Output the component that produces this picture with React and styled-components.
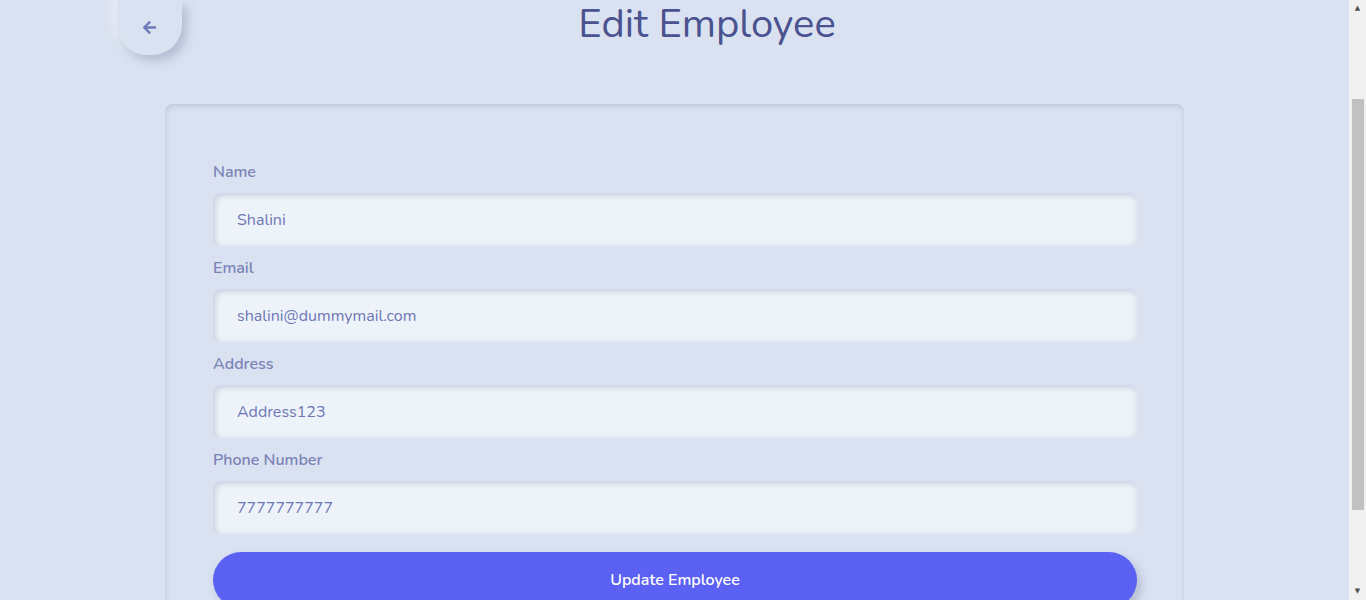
import React from "react";
import styled, { createGlobalStyle } from "styled-components";
import { FaArrowLeft } from "react-icons/fa";

const Global = createGlobalStyle`
  body {
    margin: 0;
    background: #dae2f1;
    font-family: "Nunito", "Lato", "Noto Sans", sans-serif;
  }
`;

const Shell = styled.div`
  display: flex;
  height: 100vh;
  overflow: hidden;
`;

const Main = styled.main`
  flex: 1;
  min-width: 0;
  overflow: hidden;
`;

const ScrollBar = styled.div`
  width: 17px;
  flex: none;
  background: #f1f1f1;
  display: flex;
  flex-direction: column;
  align-items: center;
`;

const ScrollArrow = styled.div`
  height: 17px;
  width: 17px;
  display: flex;
  align-items: center;
  justify-content: center;
  color: #505050;
  font-size: 7px;
  line-height: 1;
  font-family: "DejaVu Sans", sans-serif;
`;

const Track = styled.div`
  flex: 1;
  width: 100%;
  padding-top: 82px;
  box-sizing: border-box;
  display: flex;
  justify-content: center;
`;

const Thumb = styled.div`
  width: 12px;
  margin-left: 1px;
  height: 411px;
  background: #c1c1c1;
`;

const Page = styled.div`
  max-width: 1115px;
  margin: 0 auto;
  padding-bottom: 120px;
`;

const Header = styled.header`
  display: flex;
  align-items: flex-start;
`;

const BackButton = styled.button`
  width: 65px;
  height: 55px;
  flex: none;
  border: none;
  border-radius: 0 0 30px 30px;
  background: #dae2f1;
  color: #6c79b8;
  display: flex;
  align-items: center;
  justify-content: center;
  padding: 0;
  cursor: pointer;
  box-shadow: 5px 6px 10px rgba(150, 160, 185, 0.55), -4px -4px 8px rgba(255, 255, 255, 0.5);
`;

const Title = styled.h1`
  flex: 1;
  margin: 0;
  text-align: center;
  font-weight: 400;
  font-size: 40px;
  line-height: 48px;
  color: #4a5290;
`;

const Card = styled.form`
  margin: 49px 48px 0;
  padding: 57px 47px 48px 48px;
  border-radius: 8px;
  background: #dae2f1;
  box-shadow: inset 1px 3px 5px rgba(170, 180, 205, 0.5), inset -1px 0 2px rgba(195, 205, 225, 0.2);
  display: flex;
  flex-direction: column;
  gap: 10px;
`;

const Field = styled.div`
  display: flex;
  flex-direction: column;
  gap: 10px;
`;

const Label = styled.label`
  font-size: 16px;
  font-weight: 600;
  line-height: 22px;
  color: #7a82b6;
`;

const Input = styled.input`
  height: 54px;
  box-sizing: border-box;
  border: none;
  outline: none;
  border-radius: 8px;
  padding: 0 24px;
  background: #eef3f9;
  font-family: inherit;
  font-size: 16px;
  color: #6c77b5;
  box-shadow: inset 3px 3px 5px rgba(175, 185, 210, 0.5), inset -2px -2px 4px rgba(220, 226, 238, 0.8);
`;

const Submit = styled.button`
  margin-top: 7px;
  height: 56px;
  border: none;
  border-radius: 28px;
  background: #5b61f3;
  color: #ffffff;
  font-family: inherit;
  font-size: 16px;
  font-weight: 600;
  cursor: pointer;
  box-shadow: 4px 5px 10px rgba(140, 150, 180, 0.5);
`;

const fields = [
  { label: "Name", value: "Shalini" },
  { label: "Email", value: "shalini@dummymail.com" },
  { label: "Address", value: "Address123" },
  { label: "Phone Number", value: "7777777777" },
];

export default function App() {
  return (
    <>
      <Global />
      <Shell>
        <Main>
          <Page>
            <Header>
              <BackButton type="button" aria-label="Back">
                <FaArrowLeft size={15} />
              </BackButton>
              <Title>Edit Employee</Title>
            </Header>
            <Card onSubmit={(e) => e.preventDefault()}>
              {fields.map((f) => (
                <Field key={f.label}>
                  <Label>{f.label}</Label>
                  <Input defaultValue={f.value} />
                </Field>
              ))}
              <Submit type="submit">Update Employee</Submit>
            </Card>
          </Page>
        </Main>
        <ScrollBar aria-hidden="true">
          <ScrollArrow>▲</ScrollArrow>
          <Track>
            <Thumb />
          </Track>
          <ScrollArrow>▼</ScrollArrow>
        </ScrollBar>
      </Shell>
    </>
  );
}
